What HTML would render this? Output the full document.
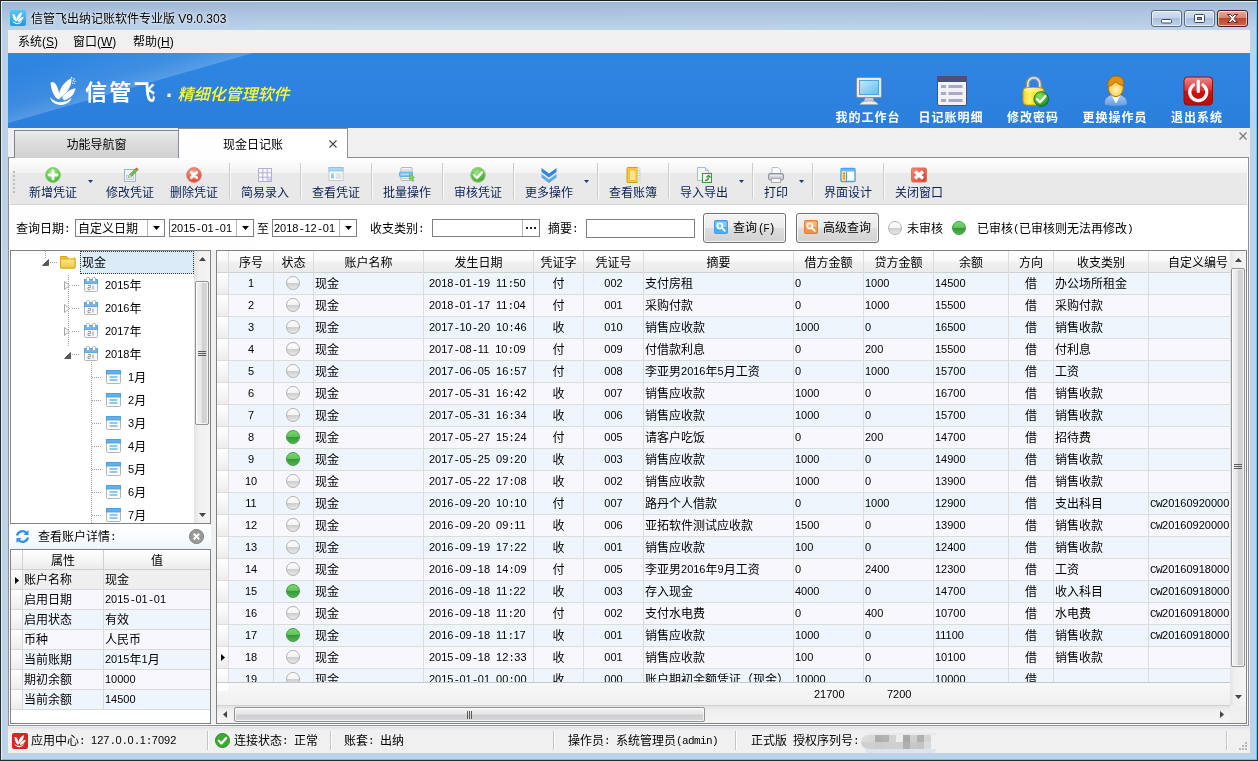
<!DOCTYPE html>
<html lang="zh-CN"><head><meta charset="utf-8"><title>信管飞出纳记账软件专业版 V9.0.303</title>
<style>
html,body{margin:0;padding:0}
body{width:1258px;height:761px;position:relative;overflow:hidden;background:#b9d1ea;
 font-family:"Liberation Sans","Noto Sans CJK SC",sans-serif;font-size:12px;line-height:14px;color:#000}
div,span,svg,i,b{position:absolute;box-sizing:border-box;display:block;font-style:normal;font-weight:normal}
#root{left:0;top:0;width:1258px;height:761px;will-change:transform;opacity:.999}
.t{white-space:nowrap;line-height:14px;height:14px}
.n,.p{position:relative;display:inline;top:-1.5px;font-size:11px}
.n{font-family:"Liberation Sans",sans-serif;letter-spacing:0}
.p{font-family:"Liberation Mono",monospace;letter-spacing:-0.6px}

#frame{left:0;top:0;width:1258px;height:761px;background:linear-gradient(180deg,#9db5d3 0px,#a9c1de 12px,#bdd3ea 30px,#bdd3ea 100%);}
#frame .edge{left:0;top:0;width:1258px;height:761px;border:1px solid #2b2b2b;border-top-color:#1c1c1c}
#frame .edge2{left:1px;top:1px;width:1256px;height:759px;border:1px solid #d9f3fb;border-right-color:#4fd2f0;border-bottom-color:#4fd2f0}
#tshine{left:2px;top:2px;width:1254px;height:28px;background:linear-gradient(90deg,rgba(255,255,255,0) 0%,rgba(255,255,255,.02) 40%,rgba(255,255,255,.05) 100%)}
#client{left:8px;top:30px;width:1242px;height:723px;background:#f0f0f0}
#ticon{left:10px;top:10px;width:16px;height:16px}
#title{left:31px;top:11px;font-size:12px;line-height:16px;height:16px;white-space:nowrap;color:#000;text-shadow:0 0 6px #fff,0 0 3px rgba(255,255,255,.8)}
.wb{top:10px;height:17px;width:31px;border:1px solid #5a6a80;border-radius:3px;background:linear-gradient(180deg,#d5e2f2 0%,#c3d5ea 45%,#a9c1de 50%,#bdd2e8 100%);box-shadow:inset 0 0 0 1px rgba(255,255,255,.6)}
#wclose{background:linear-gradient(180deg,#e9a99b 0%,#d98673 45%,#c2442b 50%,#d0664c 100%);border-color:#4b1d1d}

#menubar{left:8px;top:30px;width:1242px;height:23px;background:#f1f1f1}
#menubar .t{top:4px;font-size:12px;line-height:16px;height:16px}
#menubar u{text-decoration:underline}

#banner{left:8px;top:53px;width:1242px;height:75px;background:#2d84df;overflow:hidden}
#banner svg.bg{left:0;top:0}
#logo{left:41.800px;top:24.300px;width:26px;height:29px}
#brand{left:77px;top:26px;font-size:22px;line-height:28px;height:28px;color:#fff;font-weight:700;white-space:nowrap;letter-spacing:2.2px}
#bdot{left:158px;top:33px;font-size:22px;line-height:20px;color:#fff;font-weight:900}
#slogan{left:168px;top:31px;font-size:16px;line-height:22px;height:22px;color:#ffff30;font-weight:500;font-style:normal;white-space:nowrap;transform:skewX(-14deg);transform-origin:0 100%;}
.bi{top:22px;width:90px;height:53px}
.bi svg{top:0;left:30px;width:32px;height:32px}
.bi .l{left:0;width:90px;top:35px;text-align:center;color:#fff;font-family:"Liberation Sans","Noto Sans CJK SC",sans-serif;font-weight:700;font-size:12px;line-height:16px;height:16px;letter-spacing:1px;white-space:nowrap}

#tabstrip{left:8px;top:128px;width:1242px;height:30px;background:#f0f0f0}
#tab1{left:14px;top:130px;width:165px;height:28px;border:1px solid #7d8494;border-bottom:none;background:linear-gradient(180deg,#ececec 0%,#dedede 40%,#d2d2d2 100%)}
#tab2{left:178px;top:128px;width:170px;height:30px;border:1px solid #8a8f9c;border-bottom:none;background:#fff}
#tab1 .t,#tab2 .t{top:6px;line-height:16px;height:16px}
#page{left:8px;top:157px;width:1241px;height:569px;border:1px solid #8a8f9c;background:#fff}
#pagecover{left:179px;top:157px;width:168px;height:1px;background:#fff}
#tabx{left:1238px;top:131px;width:10px;height:10px}

#toolbar{left:10px;top:158px;width:1237px;height:47px;background:linear-gradient(180deg,#ffffff 0px,#f3f3f3 15px,#e9e9e9 15px,#e8e8e8 46px);border-bottom:1px solid #d6d6d6}
#tgrip{left:13px;top:171px;width:2px;height:23px;background:repeating-linear-gradient(180deg,#b9bcc4 0,#b9bcc4 2px,transparent 2px,transparent 4px)}
.tb{top:158px;height:46px}
.tb svg{top:9px;width:16px;height:16px}
.tb .t{top:28px;color:#0a2152;line-height:14px;height:14px}
.tsep{top:163px;width:1px;height:36px;background:#c9cbd1;box-shadow:1px 0 0 #fbfbfb}
.tarr{top:180px;width:5px;height:3px}

.fl{top:222px;line-height:14px;height:14px;white-space:nowrap}
.inp{top:219px;height:18px;border:1px solid #7f7f7f;background:#fff}
.inp .t{top:2px;left:2px}
.inp .dd{top:0;right:0;width:17px;height:16px;border-left:1px solid #b5b5b5;background:#fff}
.inp .dd svg{left:5px;top:6px;width:7px;height:4px}
.btn{top:213px;height:30px;border:1px solid #707070;border-radius:3px;background:linear-gradient(180deg,#f4f4f4 0%,#ebebeb 48%,#dddddd 52%,#d2d2d2 100%);box-shadow:inset 0 0 0 1px rgba(255,255,255,.8)}
.btn .t{top:7px}
.btn svg{top:6px;width:14px;height:14px}
.ball{width:14px;height:14px;border-radius:50%}
.ball.g{background:linear-gradient(180deg,#ffffff 0%,#f4f4f4 46%,#cfcfcf 54%,#e9e9e9 100%);border:1px solid #b2b2b2}
.ball.v{background:linear-gradient(180deg,#7bd676 0%,#5ec459 46%,#37983a 54%,#4db54c 100%);border:1px solid #3f9e40}

#tree{left:10px;top:250px;width:201px;height:274px;border:1px solid #828282;background:#fff;overflow:hidden}
#tree .t{line-height:14px;height:14px}
#tsel{left:69px;top:0;width:114px;height:23px;background:#dcebf8;border:1px dotted #333}
.vsb{background:linear-gradient(90deg,#e3e3e3 0%,#f0f0f0 30%,#f4f4f4 100%)}
.thumbv{border:1px solid #8f9297;border-radius:2px;background:linear-gradient(90deg,#f3f3f3 0%,#e6e6e6 45%,#cfcfd1 55%,#d9d9db 100%);box-shadow:inset 0 0 0 1px rgba(255,255,255,.7)}
.thumbh{border:1px solid #8f9297;border-radius:2px;background:linear-gradient(180deg,#f3f3f3 0%,#e6e6e6 45%,#cfcfd1 55%,#d9d9db 100%);box-shadow:inset 0 0 0 1px rgba(255,255,255,.7)}
.dot-h{height:1px;background:repeating-linear-gradient(90deg,#a0a0a0 0,#a0a0a0 1px,transparent 1px,transparent 2px)}
.dot-v{width:1px;background:repeating-linear-gradient(180deg,#a0a0a0 0,#a0a0a0 1px,transparent 1px,transparent 2px)}
#acct{left:10px;top:524px;width:201px;height:25px;background:linear-gradient(180deg,#ffffff 0%,#f8fbfe 60%,#edf4fb 100%)}
#prop{left:10px;top:549px;width:201px;height:175px;border:1px solid #828282;background:#fff;overflow:hidden}
#prop .hd{top:0;height:20px;background:linear-gradient(180deg,#ffffff 0%,#f6f6f6 50%,#ebebeb 100%);border-bottom:1px solid #d0d0d0;border-right:1px solid #d0d0d0}
#prop .c{height:20px;border-bottom:1px solid #d9d9dc;border-right:1px solid #d9d9dc}
#prop .t{top:3px}
#prop .hd .t{top:4px}

#grid{left:216px;top:250px;width:1031px;height:474px;border:1px solid #828282;background:#fff;overflow:hidden}
#gbody{left:0;top:0;width:1013px;height:431px;overflow:hidden}
#ghead{left:0;top:0;width:1013px;height:22px;background:linear-gradient(180deg,#ffffff 0%,#fafafa 45%,#f0f0f0 55%,#ebebeb 100%);border-bottom:1px solid #d0d0d0}
#ghead .t{top:5px;text-align:center}
.gr{left:0;width:1013px;height:22px;border-bottom:1px solid #dcdcdc}
.gr .t{top:4px}
.gr .ball{top:3px;left:69px}
.gr.a{background:#eef5fd}
.gr.b{background:#f7f7fd}
.gr .ind{left:0;top:0;width:11px;height:21px;background:linear-gradient(180deg,#ffffff 0%,#f7f7f7 50%,#ececec 100%)}
.vl{top:0;width:1px;height:432px;background:#dcdcdc}
.c{text-align:center}
#gfoot{left:0;top:431px;width:1013px;height:24px;background:linear-gradient(180deg,#f8f8f8,#f0f0f0);border-top:1px solid #c8c8c8;border-bottom:1px solid #d0d0d0}
#gfoot .t{top:5px}
#hsb{left:0;top:455px;width:1013px;height:17px;background:linear-gradient(180deg,#e3e3e3 0%,#f0f0f0 30%,#f4f4f4 100%)}
#vsb2{left:1013px;top:0;width:16px;height:455px}
#corner{left:1013px;top:455px;width:16px;height:17px;background:#f0f0f0}

#status{left:8px;top:727px;width:1242px;height:26px;background:linear-gradient(180deg,#dcdcdc 0px,#ececec 2px,#f0f0f0 5px,#f0f0f0 100%)}
#status .t{top:7px}
#status .sp{top:4px;width:1px;height:19px;background:#c4c4c4;box-shadow:1px 0 0 #fff}
#mosaic{left:861px;top:732px;width:78px;height:21px;overflow:hidden;filter:blur(.4px)}
</style></head><body>
<div id="root">
<div id="frame"><div id="tshine"></div><div class="edge"></div><div class="edge2"></div></div>
<div id="client"></div>
<svg id="ticon" viewBox="0 0 16 16"><defs><linearGradient id="tig" x1="0" y1="0" x2="0" y2="1"><stop offset="0" stop-color="#55c8f4"/><stop offset="1" stop-color="#1b9ce2"/></linearGradient></defs><rect x="0" y="0" width="16" height="16" rx="2" fill="url(#tig)"/><g fill="#fff" transform="translate(2.200 1.600) scale(.45)"><path d="M0.500 6C1.800 4.800 3.400 4.800 4.600 5.800 7.200 8.500 9.200 14 9.900 21.600L8.300 22.300C5 21 1.300 14.500 0.500 6Z"/><path d="M8.900 21.800C8 15 11.500 6.500 21.200 0.900 22.300 6 19.500 13 12.600 19.300Z"/><path d="M12.200 20.800C15 16 19.500 12.500 25.400 11.300 25 16 21.500 21 14.500 23.300 13.500 22.800 12.600 21.800 12.200 20.800Z"/><path d="M0 20C2 23 5.500 24.800 9.800 25.200 14.500 25.500 18.500 24 21.300 21.100 20.800 25 16.500 27.800 11 27.900 5.500 28 1 25 0 20Z"/></g></svg>
<div id="title">信管飞出纳记账软件专业版 V9.0.303</div>
<div class="wb" style="left:1151px"><svg width="29" height="15" style="left:0;top:0" viewBox="0 0 29 15"><rect x="9.500" y="8.500" width="10" height="3.500" rx="1" fill="#fff" stroke="#3d4b5f"/></svg></div>
<div class="wb" style="left:1184px"><svg width="29" height="15" style="left:0;top:0" viewBox="0 0 29 15"><rect x="9.500" y="3.500" width="10" height="8" rx="1" fill="#fff" stroke="#3d4b5f"/><rect x="12.500" y="6.500" width="4" height="2" fill="#8ea2bd" stroke="#3d4b5f"/></svg></div>
<div class="wb" id="wclose" style="left:1217px;width:31px"><svg width="29" height="15" style="left:0;top:0" viewBox="0 0 29 15"><path d="M9.500 3.500h3l2 2 2-2h3l-3.500 4 3.500 4h-3l-2-2-2 2h-3l3.500-4z" fill="#fff" stroke="#55282a" stroke-width="1" stroke-linejoin="round"/></svg></div>
<div id="menubar"><span class="t" style="left:10px">系统(<u>S</u>)</span><span class="t" style="left:65px">窗口(<u>W</u>)</span><span class="t" style="left:125px">帮助(<u>H</u>)</span></div>
<div id="banner"><svg class="bg" width="1242" height="75" viewBox="0 0 1242 75"><defs>
<linearGradient id="bg0" x1="0" y1="0" x2="0" y2="1"><stop offset="0" stop-color="#2f86e1"/><stop offset="1" stop-color="#2a7fdc"/></linearGradient>
<linearGradient id="bg1" gradientUnits="userSpaceOnUse" x1="40" y1="-20" x2="70" y2="85"><stop offset="0.250" stop-color="#fff" stop-opacity="0"/><stop offset="0.550" stop-color="#fff" stop-opacity="0.080"/><stop offset="0.780" stop-color="#fff" stop-opacity="0.270"/><stop offset="0.800" stop-color="#fff" stop-opacity="0"/></linearGradient>
</defs><rect width="1242" height="75" fill="url(#bg0)"/>
<polygon points="0,0 245,0 0,70" fill="url(#bg1)"/></svg><svg id="logo" viewBox="0 0 26 29"><g fill="#fff"><path d="M0.500 6C1.800 4.800 3.400 4.800 4.600 5.800 7.200 8.500 9.200 14 9.900 21.600L8.300 22.300C5 21 1.300 14.500 0.500 6Z"/><path d="M8.900 21.800C8 15 11.500 6.500 21.200 0.900 22.300 6 19.500 13 12.600 19.300Z"/><path d="M12.200 20.800C15 16 19.500 12.500 25.400 11.300 25 16 21.500 21 14.500 23.300 13.500 22.800 12.600 21.800 12.200 20.800Z"/><path d="M0 20C2 23 5.500 24.800 9.800 25.200 14.500 25.500 18.500 24 21.300 21.100 20.800 25 16.500 27.800 11 27.900 5.500 28 1 25 0 20Z"/><rect x="21" y="0" width="1.300" height="1.300"/><rect x="23.400" y="1.300" width="1.300" height="1.300"/><rect x="22.600" y="3.200" width="1.200" height="1.200"/><rect x="24.500" y="3.800" width="1.100" height="1.100"/><rect x="22" y="5.600" width="1.100" height="1.100"/><rect x="23.800" y="6" width="1" height="1"/></g></svg><div id="brand">信管飞</div><div id="bdot">·</div><div id="slogan">精细化管理软件</div><div class="bi" style="left:815px"><svg viewBox="0 0 32 32"><defs><linearGradient id="mo1" x1="0" y1="0" x2="1" y2="1"><stop offset="0" stop-color="#bfeaff"/><stop offset="1" stop-color="#5fbdf5"/></linearGradient></defs><rect x="3.500" y="2.500" width="25" height="20" rx="1.500" fill="#e8eaee" stroke="#8d939c"/><rect x="6.500" y="5.500" width="19" height="14" fill="url(#mo1)" stroke="#4aa6e6"/><path d="M12 23h8l1 3.500h-10z" fill="#c9ccd2"/><path d="M7 29.500c1-3 5-3.500 9-3.500s8 .5 9 3.500z" fill="#eceef1" stroke="#a3a8b0" stroke-width=".8"/></svg><span class="l">我的工作台</span></div><div class="bi" style="left:898px"><svg viewBox="0 0 32 32"><rect x="1.500" y="1.500" width="29" height="29" rx="1.500" fill="#f1f1f6" stroke="#4a4f73"/><rect x="1.500" y="1.500" width="29" height="5" fill="#4a5078" stroke="#4a4f73"/><g fill="#a9a9c6"><rect x="5" y="10" width="5" height="3"/><rect x="12.500" y="10" width="14" height="3"/><rect x="5" y="17" width="5" height="3"/><rect x="12.500" y="17" width="14" height="3"/><rect x="5" y="24" width="5" height="3"/><rect x="12.500" y="24" width="14" height="3"/></g></svg><span class="l">日记账明细</span></div><div class="bi" style="left:980px"><svg viewBox="0 0 32 32"><defs><linearGradient id="lk1" x1="0" y1="0" x2="1" y2="0"><stop offset="0" stop-color="#f2cf1a"/><stop offset=".3" stop-color="#fff36a"/><stop offset=".6" stop-color="#ffe21a"/><stop offset="1" stop-color="#d9a400"/></linearGradient><radialGradient id="lk2" cx=".4" cy=".3" r=".75"><stop offset="0" stop-color="#8be45f"/><stop offset="1" stop-color="#168a16"/></radialGradient></defs><path d="M9.800 15v-6.200a6 6 0 0 1 12 0v6.200" fill="none" stroke="#8a9098" stroke-width="4.200"/><path d="M9.800 15v-6.200a6 6 0 0 1 12 0v6.200" fill="none" stroke="#dfe3e8" stroke-width="1.600"/><rect x="5" y="12.500" width="21" height="17.500" rx="4" fill="url(#lk1)" stroke="#c99a08" stroke-width=".9"/><ellipse cx="15.500" cy="15" rx="9.500" ry="2.200" fill="#fff7a0" opacity=".7"/><circle cx="23.200" cy="24" r="7.300" fill="url(#lk2)" stroke="#0f6a12" stroke-width=".8"/><path d="M19 24.200l3 3 5.200-6" fill="none" stroke="#fff" stroke-width="2.500" stroke-linecap="round" stroke-linejoin="round"/></svg><span class="l">修改密码</span></div><div class="bi" style="left:1062px"><svg viewBox="0 0 32 32"><defs><radialGradient id="us1" cx=".5" cy=".6" r=".6"><stop offset="0" stop-color="#fff6c8"/><stop offset=".6" stop-color="#ffd45a"/><stop offset="1" stop-color="#f7a61a"/></radialGradient><linearGradient id="us2" x1="0" y1="0" x2="0" y2="1"><stop offset="0" stop-color="#a9cdf5"/><stop offset="1" stop-color="#5f9ae2"/></linearGradient></defs><path d="M4.500 30c-1.200-5.500 2.500-9 7-10.300h8.500c4.500 1.300 8.200 4.800 7 10.300-5.500 1.800-17 1.800-22.500 0z" fill="url(#us2)" stroke="#3f78c8" stroke-width=".9"/><path d="M11.500 20l4.500 8.500 4.500-8.500z" fill="#fff"/><ellipse cx="15.800" cy="12.800" rx="7.600" ry="8.800" fill="url(#us1)" stroke="#b86a00" stroke-width="1"/><path d="M7.800 11.500c-.8-6.500 3.500-10.800 8.800-10.500 4.800.2 8 3.500 7.300 9.500-3.200-.2-6.500-1.500-8.500-3.800-1.500 2.500-4.300 4.200-7.600 4.800z" fill="#e0900e" stroke="#a85e00" stroke-width=".8"/></svg><span class="l">更换操作员</span></div><div class="bi" style="left:1144px"><svg viewBox="0 0 32 32"><defs><linearGradient id="pw1" x1="0" y1="0" x2="0" y2="1"><stop offset="0" stop-color="#ee8a8a"/><stop offset=".48" stop-color="#d93030"/><stop offset=".5" stop-color="#c81414"/><stop offset="1" stop-color="#b80c0c"/></linearGradient></defs><rect x="2" y="2" width="28.500" height="28" rx="3.500" fill="url(#pw1)" stroke="#8e1010"/><path d="M11.500 10a8.500 8.500 0 1 0 9.500 0" fill="none" stroke="#fff" stroke-width="3.200" stroke-linecap="round"/><path d="M16.250 6v10.500" stroke="#fff" stroke-width="3.200" stroke-linecap="round"/></svg><span class="l">退出系统</span></div></div>
<div id="tabstrip"></div><div id="page"></div><div id="tab1"><span class="t" style="left:0;width:163px;text-align:center">功能导航窗</span></div><div id="tab2"><span class="t" style="left:44px;top:8px">现金日记账</span><svg style="left:150px;top:11px" width="8" height="8" viewBox="0 0 8 8"><path d="M0.500 0.500l7 7M7.500 0.500l-7 7" stroke="#444" stroke-width="1.100" fill="none"/></svg></div><div id="pagecover"></div><svg id="tabx" viewBox="0 0 10 10"><path d="M1.500 1.500l7 7M8.500 1.500l-7 7" stroke="#7a7a7a" stroke-width="1.300" fill="none"/></svg>
<div id="toolbar"></div><div id="tgrip"></div><div class="tb" style="left:29px;width:48px"><svg style="left:16px" viewBox="0 0 16 16"><defs><radialGradient id="ia1" cx=".45" cy=".3" r=".8"><stop offset="0" stop-color="#a9ec8c"/><stop offset=".6" stop-color="#62c94c"/><stop offset="1" stop-color="#3aa82e"/></radialGradient></defs><circle cx="8" cy="8" r="7.400" fill="url(#ia1)" stroke="#7fd46a" stroke-width="1"/><path d="M8 4v8M4 8h8" stroke="#fff" stroke-width="2.800" stroke-linecap="round"/></svg><span class="t" style="left:0">新增凭证</span></div><div class="tb" style="left:106px;width:48px"><svg style="left:17px" viewBox="0 0 16 16"><rect x="1.500" y="2.500" width="11" height="12" fill="#f4f7fc" stroke="#9fb3d6"/><rect x="3.500" y="8.500" width="7" height="4" fill="#dfe8f6" stroke="#b7c7e4" stroke-width=".8"/><path d="M5.500 10.500l1-3 6-6 2 2-6 6z" fill="#6cc04a" stroke="#4f9a35" stroke-width=".6"/><path d="M12.500 1.500l1.200-1 2 2-1.200 1z" fill="#e05050"/><path d="M5.500 10.500l1-3 2 2z" fill="#f3d9a8"/></svg><span class="t" style="left:0">修改凭证</span></div><div class="tb" style="left:170px;width:48px"><svg style="left:16px" viewBox="0 0 16 16"><defs><radialGradient id="id1" cx=".45" cy=".3" r=".8"><stop offset="0" stop-color="#f7a896"/><stop offset=".6" stop-color="#e8604c"/><stop offset="1" stop-color="#cf3d2a"/></radialGradient></defs><circle cx="8" cy="8" r="7.400" fill="url(#id1)" stroke="#ee8270" stroke-width="1"/><path d="M5.200 5.200l5.600 5.600M10.800 5.200l-5.600 5.600" stroke="#fff" stroke-width="2.800" stroke-linecap="round"/></svg><span class="t" style="left:0">删除凭证</span></div><div class="tb" style="left:241px;width:48px"><svg style="left:16px" viewBox="0 0 16 16"><rect x="1.500" y="1.500" width="13" height="13" fill="#f7f6fc" stroke="#b4b0d2"/><path d="M1.500 5.800h13M1.500 10.200h13M5.800 1.500v13M10.200 1.500v13" stroke="#b4b0d2" stroke-width="1"/><rect x="10.700" y="10.700" width="3.300" height="3.300" fill="#d6d2ee"/></svg><span class="t" style="left:0">简易录入</span></div><div class="tb" style="left:312px;width:48px"><svg style="left:16px" viewBox="0 0 16 16"><rect x="1" y="0.500" width="14" height="13" fill="#fff" stroke="#c4c8d0"/><rect x="1" y="0.500" width="14" height="3.500" fill="#a5d8fa" stroke="#7cc0f0" stroke-width=".8"/><rect x="3" y="6.500" width="3" height="5" fill="#8fc8f2"/><path d="M7.500 7h6M7.500 9h6M7.500 11h6" stroke="#c2c6d0" stroke-width="1"/></svg><span class="t" style="left:0">查看凭证</span></div><div class="tb" style="left:383px;width:48px"><svg style="left:16px" viewBox="0 0 16 16"><rect x="2" y="0.500" width="11" height="13" rx="1" fill="#f6f6f7" stroke="#b4b6bc"/><path d="M3 3h9M3 11.500h9" stroke="#c9cbd0"/><rect x="0.500" y="5" width="13" height="4.500" rx="1" fill="#7cc4f4" stroke="#4fa6e6" stroke-width=".8"/><path d="M2 7.200h10" stroke="#d8efff" stroke-width=".8"/><path d="M10.500 6.500l5 4-2 .4 1.400 2.700-1.400.7-1.400-2.700-1.600 1.400z" fill="#7ddc5a" stroke="#4fb432" stroke-width=".6"/></svg><span class="t" style="left:0">批量操作</span></div><div class="tb" style="left:454px;width:48px"><svg style="left:16px" viewBox="0 0 16 16"><defs><radialGradient id="iu1" cx=".4" cy=".3" r=".8"><stop offset="0" stop-color="#a6e38a"/><stop offset=".6" stop-color="#5ab944"/><stop offset="1" stop-color="#3b9a2a"/></radialGradient></defs><circle cx="8" cy="8" r="7.300" fill="url(#iu1)" stroke="#8fcf7c" stroke-width="1.200"/><path d="M4.200 8.200l2.800 2.800 5-5.800" fill="none" stroke="#fff" stroke-width="2.400" stroke-linecap="round" stroke-linejoin="round"/></svg><span class="t" style="left:0">审核凭证</span></div><div class="tb" style="left:525px;width:48px"><svg style="left:16px" viewBox="0 0 16 16"><path d="M0.500 1L8 6.500 15.500 1v4L8 10.500 0.500 5z" fill="#2f86e8"/><path d="M0.500 7L8 12.500 15.500 7v3.500L8 16 0.500 10.500z" fill="#5aa8f2"/></svg><span class="t" style="left:0">更多操作</span></div><div class="tb" style="left:609px;width:48px"><svg style="left:16px" viewBox="0 0 16 16"><rect x="2" y="0.500" width="11" height="15" rx="1" fill="#f6c93a" stroke="#cf9d16"/><rect x="4.500" y="3" width="6.500" height="10.500" rx="1" fill="#fbe489" stroke="#e8b62a" stroke-width=".8"/><rect x="12.500" y="1" width="2.500" height="14" fill="#f4f4f4" stroke="#c8c8c8" stroke-width=".6"/><path d="M12.500 3.500h2.500M12.500 6h2.500M12.500 8.500h2.500M12.500 11h2.500M12.500 13h2.500" stroke="#b9b9b9" stroke-width=".6"/></svg><span class="t" style="left:0">查看账簿</span></div><div class="tb" style="left:680px;width:48px"><svg style="left:16px" viewBox="0 0 16 16"><path d="M1.500 0.500h8l3 3v10h-11z" fill="#f5f8fd" stroke="#a8b8d8"/><path d="M9.500 0.500v3h3" fill="#dfe7f5" stroke="#a8b8d8"/><rect x="6.500" y="6.500" width="9" height="9" fill="#fff" stroke="#3f9a3a" stroke-width="1.200"/><path d="M9 13.500c2.500 0 3.500-1.500 3.500-3M10.500 10.500l2-2 2 2" fill="none" stroke="#2f9a2f" stroke-width="1.500"/></svg><span class="t" style="left:0">导入导出</span></div><div class="tb" style="left:764px;width:24px"><svg style="left:4px" viewBox="0 0 16 16"><path d="M4 0.500h6l2.500 2.500v5h-8.500z" fill="#fafbfd" stroke="#b6bcc8"/><rect x="0.500" y="6.500" width="15" height="6.500" rx="1.500" fill="#c7cad1" stroke="#8d929c"/><rect x="2" y="8" width="12" height="1.500" fill="#e6e8ec"/><rect x="3.500" y="11.500" width="9" height="4" fill="#f6f7f9" stroke="#a5aab4"/></svg><span class="t" style="left:0">打印</span></div><div class="tb" style="left:824px;width:48px"><svg style="left:16px" viewBox="0 0 16 16"><rect x="1" y="1.500" width="14" height="13" rx="1" fill="#fff" stroke="#4c9ff0" stroke-width="1.400"/><rect x="1.500" y="2" width="13" height="2.500" fill="#6db4f5"/><rect x="2" y="4.500" width="4" height="9.500" fill="#fbe68a"/><path d="M3 6.500h2M3 9h2M3 11.500h2" stroke="#e07a1e" stroke-width="1.300"/><path d="M6.500 4.500v9.500" stroke="#4c9ff0"/></svg><span class="t" style="left:0">界面设计</span></div><div class="tb" style="left:895px;width:48px"><svg style="left:16px" viewBox="0 0 16 16"><defs><linearGradient id="ic1" x1="0" y1="0" x2="1" y2="1"><stop offset="0" stop-color="#f68a76"/><stop offset="1" stop-color="#dc3c26"/></linearGradient></defs><rect x="0.500" y="1" width="15" height="14" rx="1.500" fill="url(#ic1)" stroke="#e0705e"/><path d="M4 4.500l8 7M12 4.500l-8 7" stroke="#fff" stroke-width="3.400" stroke-linecap="butt"/></svg><span class="t" style="left:0">关闭窗口</span></div><div class="tsep" style="left:229px"></div><div class="tsep" style="left:300px"></div><div class="tsep" style="left:371px"></div><div class="tsep" style="left:442px"></div><div class="tsep" style="left:513px"></div><div class="tsep" style="left:597px"></div><div class="tsep" style="left:668px"></div><div class="tsep" style="left:752px"></div><div class="tsep" style="left:812px"></div><div class="tsep" style="left:883px"></div><svg class="tarr" style="left:88px" viewBox="0 0 5 3"><path d="M0 0h5l-2.500 3z" fill="#1e3a6b"/></svg><svg class="tarr" style="left:584px" viewBox="0 0 5 3"><path d="M0 0h5l-2.500 3z" fill="#1e3a6b"/></svg><svg class="tarr" style="left:739px" viewBox="0 0 5 3"><path d="M0 0h5l-2.500 3z" fill="#1e3a6b"/></svg><svg class="tarr" style="left:799px" viewBox="0 0 5 3"><path d="M0 0h5l-2.500 3z" fill="#1e3a6b"/></svg>
<span class="fl" style="left:16px">查询日期<span class="p">:</span></span><div class="inp" style="left:75px;width:90px"><span class="t">自定义日期</span><i class="dd"><svg viewBox="0 0 7 4"><path d="M0 0h7l-3.500 4z" fill="#000"/></svg></i></div><div class="inp" style="left:169px;width:85px"><span class="t" style="left:1px"><span class="n">2015</span><span class="p">-</span><span class="n">01</span><span class="p">-</span><span class="n">01</span></span><i class="dd"><svg viewBox="0 0 7 4"><path d="M0 0h7l-3.500 4z" fill="#000"/></svg></i></div><span class="fl" style="left:257px">至</span><div class="inp" style="left:272px;width:85px"><span class="t" style="left:1px"><span class="n">2018</span><span class="p">-</span><span class="n">12</span><span class="p">-</span><span class="n">01</span></span><i class="dd"><svg viewBox="0 0 7 4"><path d="M0 0h7l-3.500 4z" fill="#000"/></svg></i></div><span class="fl" style="left:370px">收支类别<span class="p">:</span></span><div class="inp" style="left:432px;width:108px"><i class="dd" style="width:17px"><svg style="left:3px;top:7px;width:10px;height:2px" viewBox="0 0 10 2"><path d="M0 0h2v2h-2zM4 0h2v2h-2zM8 0h2v2h-2z" fill="#222"/></svg></i></div><span class="fl" style="left:548px">摘要<span class="p">:</span></span><div class="inp" style="left:586px;width:109px;height:19px"></div><div class="btn" style="left:703px;width:83px"><svg style="left:10px" viewBox="0 0 15 15"><rect x="0.500" y="0.500" width="14" height="14" rx="1.500" fill="#4aaef0" stroke="#3d9be6"/><rect x="1.500" y="1.500" width="12" height="6" rx="1" fill="#a8defc" opacity=".6"/><circle cx="6.300" cy="6.300" r="2.800" fill="none" stroke="#fff" stroke-width="1.700"/><path d="M8.600 8.600l3 3" stroke="#fff" stroke-width="2" stroke-linecap="round"/></svg><span class="t" style="left:29px">查询<span style="position:static;display:inline;margin-left:2px;letter-spacing:.5px">(<span style="position:static;display:inline;font-size:10px">F</span>)</span></span></div><div class="btn" style="left:796px;width:83px"><svg style="left:7px" viewBox="0 0 15 15"><rect x="0.500" y="0.500" width="14" height="14" rx="1.500" fill="#f0924a" stroke="#e07a34"/><rect x="1.500" y="1.500" width="12" height="6" rx="1" fill="#ffd0a4" opacity=".6"/><circle cx="6.300" cy="6.300" r="2.800" fill="none" stroke="#fff" stroke-width="1.700"/><path d="M8.600 8.600l3 3" stroke="#fff" stroke-width="2" stroke-linecap="round"/></svg><span class="t" style="left:26px">高级查询</span></div><div class="ball g" style="left:888px;top:221px"></div><span class="fl" style="left:907px">未审核</span><div class="ball v" style="left:952px;top:221px"></div><span class="fl" style="left:977px">已审核<span class="p">(</span>已审核则无法再修改<span class="p">)</span></span>
<div style="left:211px;top:250px;width:5px;height:474px;background:#f0f0f0"></div><div id="tree"><div id="tsel"></div><svg style="left:31px;top:8px" width="7" height="7" viewBox="0 0 7 7"><path d="M6.500 0.500v6h-6z" fill="#595959" stroke="#262626" stroke-width=".6"/></svg><div class="dot-h" style="left:39px;top:11px;width:7px"></div><div class="dot-v" style="left:34px;top:0;width:1px;height:8px"></div><svg style="left:49px;top:4px" width="16" height="14" viewBox="0 0 16 14"><defs><linearGradient id="fo1" x1="0" y1="0" x2="0" y2="1"><stop offset="0" stop-color="#fde88a"/><stop offset="1" stop-color="#f3c838"/></linearGradient></defs><path d="M0.500 1.500h6l1 1.500h7.500v10h-14.500z" fill="#f0c233" stroke="#d3a21c"/><rect x="0.500" y="4" width="14.500" height="9" rx=".5" fill="url(#fo1)" stroke="#d9a920"/><rect x="8.500" y="1.500" width="5" height="2" fill="#fff6c8"/></svg><span class="t" style="left:71px;top:5px">现金</span><div class="dot-v" style="left:57px;top:24px;height:72px"></div><svg style="left:53px;top:30px" width="7" height="9" viewBox="0 0 7 9"><path d="M0.500 0.500l5 4-5 4z" fill="#fff" stroke="#a6a6a6" stroke-width="1"/></svg><div class="dot-h" style="left:61px;top:34px;width:8px"></div><svg style="left:73px;top:26px" width="14" height="15" viewBox="0 0 14 15"><rect x="0.500" y="2.500" width="13" height="12" rx="1" fill="#f7f7f7" stroke="#b4b4b4"/><rect x="0.500" y="2.500" width="13" height="4" fill="#6db8f2" stroke="#4c9fe2" stroke-width=".8"/><rect x="2.500" y="0.500" width="3" height="4" rx="1" fill="#fff" stroke="#9a9a9a" stroke-width=".8"/><rect x="8.500" y="0.500" width="3" height="4" rx="1" fill="#fff" stroke="#9a9a9a" stroke-width=".8"/><path d="M4 8.500h2.500v2h-2.500v2h2.500M9 8.500v4" fill="none" stroke="#9a9a9a" stroke-width="1"/></svg><span class="t" style="left:94px;top:28px"><span class="n">2015</span>年</span><svg style="left:53px;top:53px" width="7" height="9" viewBox="0 0 7 9"><path d="M0.500 0.500l5 4-5 4z" fill="#fff" stroke="#a6a6a6" stroke-width="1"/></svg><div class="dot-h" style="left:61px;top:57px;width:8px"></div><svg style="left:73px;top:49px" width="14" height="15" viewBox="0 0 14 15"><rect x="0.500" y="2.500" width="13" height="12" rx="1" fill="#f7f7f7" stroke="#b4b4b4"/><rect x="0.500" y="2.500" width="13" height="4" fill="#6db8f2" stroke="#4c9fe2" stroke-width=".8"/><rect x="2.500" y="0.500" width="3" height="4" rx="1" fill="#fff" stroke="#9a9a9a" stroke-width=".8"/><rect x="8.500" y="0.500" width="3" height="4" rx="1" fill="#fff" stroke="#9a9a9a" stroke-width=".8"/><path d="M4 8.500h2.500v2h-2.500v2h2.500M9 8.500v4" fill="none" stroke="#9a9a9a" stroke-width="1"/></svg><span class="t" style="left:94px;top:51px"><span class="n">2016</span>年</span><svg style="left:53px;top:76px" width="7" height="9" viewBox="0 0 7 9"><path d="M0.500 0.500l5 4-5 4z" fill="#fff" stroke="#a6a6a6" stroke-width="1"/></svg><div class="dot-h" style="left:61px;top:80px;width:8px"></div><svg style="left:73px;top:72px" width="14" height="15" viewBox="0 0 14 15"><rect x="0.500" y="2.500" width="13" height="12" rx="1" fill="#f7f7f7" stroke="#b4b4b4"/><rect x="0.500" y="2.500" width="13" height="4" fill="#6db8f2" stroke="#4c9fe2" stroke-width=".8"/><rect x="2.500" y="0.500" width="3" height="4" rx="1" fill="#fff" stroke="#9a9a9a" stroke-width=".8"/><rect x="8.500" y="0.500" width="3" height="4" rx="1" fill="#fff" stroke="#9a9a9a" stroke-width=".8"/><path d="M4 8.500h2.500v2h-2.500v2h2.500M9 8.500v4" fill="none" stroke="#9a9a9a" stroke-width="1"/></svg><span class="t" style="left:94px;top:74px"><span class="n">2017</span>年</span><svg style="left:53px;top:101px" width="7" height="7" viewBox="0 0 7 7"><path d="M6.500 0.500v6h-6z" fill="#595959" stroke="#262626" stroke-width=".6"/></svg><div class="dot-h" style="left:61px;top:103px;width:8px"></div><svg style="left:73px;top:95px" width="14" height="15" viewBox="0 0 14 15"><rect x="0.500" y="2.500" width="13" height="12" rx="1" fill="#f7f7f7" stroke="#b4b4b4"/><rect x="0.500" y="2.500" width="13" height="4" fill="#6db8f2" stroke="#4c9fe2" stroke-width=".8"/><rect x="2.500" y="0.500" width="3" height="4" rx="1" fill="#fff" stroke="#9a9a9a" stroke-width=".8"/><rect x="8.500" y="0.500" width="3" height="4" rx="1" fill="#fff" stroke="#9a9a9a" stroke-width=".8"/><path d="M4 8.500h2.500v2h-2.500v2h2.500M9 8.500v4" fill="none" stroke="#9a9a9a" stroke-width="1"/></svg><span class="t" style="left:94px;top:97px"><span class="n">2018</span>年</span><div class="dot-v" style="left:80px;top:111px;height:171px"></div><div class="dot-h" style="left:81px;top:126px;width:10px"></div><svg style="left:95px;top:119px" width="15" height="14" viewBox="0 0 15 14"><rect x="0.500" y="0.500" width="14" height="13" rx="1" fill="#fbfbfb" stroke="#b4b4b4"/><rect x="0.500" y="0.500" width="14" height="3.500" fill="#5fb2f0" stroke="#3f9be4" stroke-width=".8"/><path d="M3.500 7h8M3.500 10h8" stroke="#6db8f2" stroke-width="1.600"/></svg><span class="t" style="left:117px;top:120px"><span class="n">1</span>月</span><div class="dot-h" style="left:81px;top:149px;width:10px"></div><svg style="left:95px;top:142px" width="15" height="14" viewBox="0 0 15 14"><rect x="0.500" y="0.500" width="14" height="13" rx="1" fill="#fbfbfb" stroke="#b4b4b4"/><rect x="0.500" y="0.500" width="14" height="3.500" fill="#5fb2f0" stroke="#3f9be4" stroke-width=".8"/><path d="M3.500 7h8M3.500 10h8" stroke="#6db8f2" stroke-width="1.600"/></svg><span class="t" style="left:117px;top:143px"><span class="n">2</span>月</span><div class="dot-h" style="left:81px;top:172px;width:10px"></div><svg style="left:95px;top:165px" width="15" height="14" viewBox="0 0 15 14"><rect x="0.500" y="0.500" width="14" height="13" rx="1" fill="#fbfbfb" stroke="#b4b4b4"/><rect x="0.500" y="0.500" width="14" height="3.500" fill="#5fb2f0" stroke="#3f9be4" stroke-width=".8"/><path d="M3.500 7h8M3.500 10h8" stroke="#6db8f2" stroke-width="1.600"/></svg><span class="t" style="left:117px;top:166px"><span class="n">3</span>月</span><div class="dot-h" style="left:81px;top:195px;width:10px"></div><svg style="left:95px;top:188px" width="15" height="14" viewBox="0 0 15 14"><rect x="0.500" y="0.500" width="14" height="13" rx="1" fill="#fbfbfb" stroke="#b4b4b4"/><rect x="0.500" y="0.500" width="14" height="3.500" fill="#5fb2f0" stroke="#3f9be4" stroke-width=".8"/><path d="M3.500 7h8M3.500 10h8" stroke="#6db8f2" stroke-width="1.600"/></svg><span class="t" style="left:117px;top:189px"><span class="n">4</span>月</span><div class="dot-h" style="left:81px;top:218px;width:10px"></div><svg style="left:95px;top:211px" width="15" height="14" viewBox="0 0 15 14"><rect x="0.500" y="0.500" width="14" height="13" rx="1" fill="#fbfbfb" stroke="#b4b4b4"/><rect x="0.500" y="0.500" width="14" height="3.500" fill="#5fb2f0" stroke="#3f9be4" stroke-width=".8"/><path d="M3.500 7h8M3.500 10h8" stroke="#6db8f2" stroke-width="1.600"/></svg><span class="t" style="left:117px;top:212px"><span class="n">5</span>月</span><div class="dot-h" style="left:81px;top:241px;width:10px"></div><svg style="left:95px;top:234px" width="15" height="14" viewBox="0 0 15 14"><rect x="0.500" y="0.500" width="14" height="13" rx="1" fill="#fbfbfb" stroke="#b4b4b4"/><rect x="0.500" y="0.500" width="14" height="3.500" fill="#5fb2f0" stroke="#3f9be4" stroke-width=".8"/><path d="M3.500 7h8M3.500 10h8" stroke="#6db8f2" stroke-width="1.600"/></svg><span class="t" style="left:117px;top:235px"><span class="n">6</span>月</span><div class="dot-h" style="left:81px;top:264px;width:10px"></div><svg style="left:95px;top:257px" width="15" height="14" viewBox="0 0 15 14"><rect x="0.500" y="0.500" width="14" height="13" rx="1" fill="#fbfbfb" stroke="#b4b4b4"/><rect x="0.500" y="0.500" width="14" height="3.500" fill="#5fb2f0" stroke="#3f9be4" stroke-width=".8"/><path d="M3.500 7h8M3.500 10h8" stroke="#6db8f2" stroke-width="1.600"/></svg><span class="t" style="left:117px;top:258px"><span class="n">7</span>月</span><div class="vsb" style="left:183px;top:0;width:17px;height:272px"></div><svg style="left:188px;top:6px" width="7" height="4" viewBox="0 0 7 4"><path d="M0 4h7l-3.500-4z" fill="#444"/></svg><svg style="left:188px;top:262px" width="7" height="4" viewBox="0 0 7 4"><path d="M0 0h7l-3.500 4z" fill="#444"/></svg><div class="thumbv" style="left:184px;top:30px;width:14px;height:144px"></div><div style="left:187px;top:100px;width:8px;height:5px;background:repeating-linear-gradient(180deg,#5a5a5a 0,#5a5a5a 1px,transparent 1px,transparent 2px)"></div></div>
<div id="acct"><svg style="left:5px;top:5px" width="15" height="15" viewBox="0 0 15 15"><g fill="none" stroke="#2f8ee6" stroke-width="2.200"><path d="M2 6.500a5.500 5.500 0 0 1 9.500-2.500"/><path d="M13 8.500a5.500 5.500 0 0 1-9.500 2.500"/></g><path d="M13.500 1v5h-5z" fill="#2f8ee6"/><path d="M1.500 14v-5h5z" fill="#2f8ee6"/></svg><span class="t" style="left:28px;top:6px">查看账户详情<span class="p">:</span></span><svg style="left:179px;top:5px" width="15" height="15" viewBox="0 0 15 15"><circle cx="7.500" cy="7.500" r="7" fill="#9a9a9a" stroke="#7c7c7c"/><path d="M4.800 4.800l5.400 5.400M10.200 4.800l-5.400 5.400" stroke="#fff" stroke-width="2"/></svg></div><div id="prop"><div class="hd" style="left:0;width:12px"></div><div class="hd" style="left:12px;width:81px"><span class="t" style="left:0;width:80px;text-align:center">属性</span></div><div class="hd" style="left:93px;width:107px"><span class="t" style="left:0;width:106px;text-align:center">值</span></div><div class="c" style="left:0;top:20px;width:12px;background:linear-gradient(180deg,#fff,#ececec)"></div><div class="c" style="left:12px;top:20px;width:81px;background:#efefef"><span class="t" style="left:1px">账户名称</span></div><div class="c" style="left:93px;top:20px;width:107px;background:#efefef"><span class="t" style="left:1px">现金</span></div><div class="c" style="left:0;top:40px;width:12px;background:linear-gradient(180deg,#fff,#ececec)"></div><div class="c" style="left:12px;top:40px;width:81px;background:#f7f7fd"><span class="t" style="left:1px">启用日期</span></div><div class="c" style="left:93px;top:40px;width:107px;background:#f7f7fd"><span class="t" style="left:1px"><span class="n">2015</span><span class="p">-</span><span class="n">01</span><span class="p">-</span><span class="n">01</span></span></div><div class="c" style="left:0;top:60px;width:12px;background:linear-gradient(180deg,#fff,#ececec)"></div><div class="c" style="left:12px;top:60px;width:81px;background:#eef5fd"><span class="t" style="left:1px">启用状态</span></div><div class="c" style="left:93px;top:60px;width:107px;background:#eef5fd"><span class="t" style="left:1px">有效</span></div><div class="c" style="left:0;top:80px;width:12px;background:linear-gradient(180deg,#fff,#ececec)"></div><div class="c" style="left:12px;top:80px;width:81px;background:#f7f7fd"><span class="t" style="left:1px">币种</span></div><div class="c" style="left:93px;top:80px;width:107px;background:#f7f7fd"><span class="t" style="left:1px">人民币</span></div><div class="c" style="left:0;top:100px;width:12px;background:linear-gradient(180deg,#fff,#ececec)"></div><div class="c" style="left:12px;top:100px;width:81px;background:#eef5fd"><span class="t" style="left:1px">当前账期</span></div><div class="c" style="left:93px;top:100px;width:107px;background:#eef5fd"><span class="t" style="left:1px"><span class="n">2015</span>年<span class="n">1</span>月</span></div><div class="c" style="left:0;top:120px;width:12px;background:linear-gradient(180deg,#fff,#ececec)"></div><div class="c" style="left:12px;top:120px;width:81px;background:#f7f7fd"><span class="t" style="left:1px">期初余额</span></div><div class="c" style="left:93px;top:120px;width:107px;background:#f7f7fd"><span class="t" style="left:1px"><span class="n">10000</span></span></div><div class="c" style="left:0;top:140px;width:12px;background:linear-gradient(180deg,#fff,#ececec)"></div><div class="c" style="left:12px;top:140px;width:81px;background:#eef5fd"><span class="t" style="left:1px">当前余额</span></div><div class="c" style="left:93px;top:140px;width:107px;background:#eef5fd"><span class="t" style="left:1px"><span class="n">14500</span></span></div><svg style="left:4px;top:27px" width="4" height="7" viewBox="0 0 4 7"><path d="M0 0l4 3.500-4 3.500z" fill="#000"/></svg></div>
<div id="grid"><div id="gbody"><div id="ghead"><span class="t" style="left:12px;width:44px">序号</span><span class="t" style="left:57px;width:39px">状态</span><span class="t" style="left:97px;width:109px">账户名称</span><span class="t" style="left:207px;width:109px">发生日期</span><span class="t" style="left:317px;width:49px">凭证字</span><span class="t" style="left:367px;width:59px">凭证号</span><span class="t" style="left:427px;width:149px">摘要</span><span class="t" style="left:577px;width:69px">借方金额</span><span class="t" style="left:647px;width:69px">贷方金额</span><span class="t" style="left:717px;width:74px">余额</span><span class="t" style="left:792px;width:44px">方向</span><span class="t" style="left:837px;width:94px">收支类别</span><span class="t" style="left:932px;width:98px">自定义编号</span></div><div class="gr a" style="top:22px"><i class="ind"></i><span class="t c" style="left:12px;width:44px"><span class="n">1</span></span><i class="ball g"></i><span class="t" style="left:98px">现金</span><span class="t" style="left:212px"><span class="n">2018</span><span class="p">-</span><span class="n">01</span><span class="p">-</span><span class="n">19</span><span class="p"> </span><span class="n">11</span><span class="p">:</span><span class="n">50</span></span><span class="t c" style="left:317px;width:49px">付</span><span class="t c" style="left:367px;width:59px"><span class="n">002</span></span><span class="t" style="left:428px">支付房租</span><span class="t" style="left:578px"><span class="n">0</span></span><span class="t" style="left:648px"><span class="n">1000</span></span><span class="t" style="left:718px"><span class="n">14500</span></span><span class="t c" style="left:792px;width:44px">借</span><span class="t" style="left:838px">办公场所租金</span></div><div class="gr b" style="top:44px"><i class="ind"></i><span class="t c" style="left:12px;width:44px"><span class="n">2</span></span><i class="ball g"></i><span class="t" style="left:98px">现金</span><span class="t" style="left:212px"><span class="n">2018</span><span class="p">-</span><span class="n">01</span><span class="p">-</span><span class="n">17</span><span class="p"> </span><span class="n">11</span><span class="p">:</span><span class="n">04</span></span><span class="t c" style="left:317px;width:49px">付</span><span class="t c" style="left:367px;width:59px"><span class="n">001</span></span><span class="t" style="left:428px">采购付款</span><span class="t" style="left:578px"><span class="n">0</span></span><span class="t" style="left:648px"><span class="n">1000</span></span><span class="t" style="left:718px"><span class="n">15500</span></span><span class="t c" style="left:792px;width:44px">借</span><span class="t" style="left:838px">采购付款</span></div><div class="gr a" style="top:66px"><i class="ind"></i><span class="t c" style="left:12px;width:44px"><span class="n">3</span></span><i class="ball g"></i><span class="t" style="left:98px">现金</span><span class="t" style="left:212px"><span class="n">2017</span><span class="p">-</span><span class="n">10</span><span class="p">-</span><span class="n">20</span><span class="p"> </span><span class="n">10</span><span class="p">:</span><span class="n">46</span></span><span class="t c" style="left:317px;width:49px">收</span><span class="t c" style="left:367px;width:59px"><span class="n">010</span></span><span class="t" style="left:428px">销售应收款</span><span class="t" style="left:578px"><span class="n">1000</span></span><span class="t" style="left:648px"><span class="n">0</span></span><span class="t" style="left:718px"><span class="n">16500</span></span><span class="t c" style="left:792px;width:44px">借</span><span class="t" style="left:838px">销售收款</span></div><div class="gr b" style="top:88px"><i class="ind"></i><span class="t c" style="left:12px;width:44px"><span class="n">4</span></span><i class="ball g"></i><span class="t" style="left:98px">现金</span><span class="t" style="left:212px"><span class="n">2017</span><span class="p">-</span><span class="n">08</span><span class="p">-</span><span class="n">11</span><span class="p"> </span><span class="n">10</span><span class="p">:</span><span class="n">09</span></span><span class="t c" style="left:317px;width:49px">付</span><span class="t c" style="left:367px;width:59px"><span class="n">009</span></span><span class="t" style="left:428px">付借款利息</span><span class="t" style="left:578px"><span class="n">0</span></span><span class="t" style="left:648px"><span class="n">200</span></span><span class="t" style="left:718px"><span class="n">15500</span></span><span class="t c" style="left:792px;width:44px">借</span><span class="t" style="left:838px">付利息</span></div><div class="gr a" style="top:110px"><i class="ind"></i><span class="t c" style="left:12px;width:44px"><span class="n">5</span></span><i class="ball g"></i><span class="t" style="left:98px">现金</span><span class="t" style="left:212px"><span class="n">2017</span><span class="p">-</span><span class="n">06</span><span class="p">-</span><span class="n">05</span><span class="p"> </span><span class="n">16</span><span class="p">:</span><span class="n">57</span></span><span class="t c" style="left:317px;width:49px">付</span><span class="t c" style="left:367px;width:59px"><span class="n">008</span></span><span class="t" style="left:428px">李亚男<span class="n">2016</span>年<span class="n">5</span>月工资</span><span class="t" style="left:578px"><span class="n">0</span></span><span class="t" style="left:648px"><span class="n">1000</span></span><span class="t" style="left:718px"><span class="n">15700</span></span><span class="t c" style="left:792px;width:44px">借</span><span class="t" style="left:838px">工资</span></div><div class="gr b" style="top:132px"><i class="ind"></i><span class="t c" style="left:12px;width:44px"><span class="n">6</span></span><i class="ball g"></i><span class="t" style="left:98px">现金</span><span class="t" style="left:212px"><span class="n">2017</span><span class="p">-</span><span class="n">05</span><span class="p">-</span><span class="n">31</span><span class="p"> </span><span class="n">16</span><span class="p">:</span><span class="n">42</span></span><span class="t c" style="left:317px;width:49px">收</span><span class="t c" style="left:367px;width:59px"><span class="n">007</span></span><span class="t" style="left:428px">销售应收款</span><span class="t" style="left:578px"><span class="n">1000</span></span><span class="t" style="left:648px"><span class="n">0</span></span><span class="t" style="left:718px"><span class="n">16700</span></span><span class="t c" style="left:792px;width:44px">借</span><span class="t" style="left:838px">销售收款</span></div><div class="gr a" style="top:154px"><i class="ind"></i><span class="t c" style="left:12px;width:44px"><span class="n">7</span></span><i class="ball g"></i><span class="t" style="left:98px">现金</span><span class="t" style="left:212px"><span class="n">2017</span><span class="p">-</span><span class="n">05</span><span class="p">-</span><span class="n">31</span><span class="p"> </span><span class="n">16</span><span class="p">:</span><span class="n">34</span></span><span class="t c" style="left:317px;width:49px">收</span><span class="t c" style="left:367px;width:59px"><span class="n">006</span></span><span class="t" style="left:428px">销售应收款</span><span class="t" style="left:578px"><span class="n">1000</span></span><span class="t" style="left:648px"><span class="n">0</span></span><span class="t" style="left:718px"><span class="n">15700</span></span><span class="t c" style="left:792px;width:44px">借</span><span class="t" style="left:838px">销售收款</span></div><div class="gr b" style="top:176px"><i class="ind"></i><span class="t c" style="left:12px;width:44px"><span class="n">8</span></span><i class="ball v"></i><span class="t" style="left:98px">现金</span><span class="t" style="left:212px"><span class="n">2017</span><span class="p">-</span><span class="n">05</span><span class="p">-</span><span class="n">27</span><span class="p"> </span><span class="n">15</span><span class="p">:</span><span class="n">24</span></span><span class="t c" style="left:317px;width:49px">付</span><span class="t c" style="left:367px;width:59px"><span class="n">005</span></span><span class="t" style="left:428px">请客户吃饭</span><span class="t" style="left:578px"><span class="n">0</span></span><span class="t" style="left:648px"><span class="n">200</span></span><span class="t" style="left:718px"><span class="n">14700</span></span><span class="t c" style="left:792px;width:44px">借</span><span class="t" style="left:838px">招待费</span></div><div class="gr a" style="top:198px"><i class="ind"></i><span class="t c" style="left:12px;width:44px"><span class="n">9</span></span><i class="ball v"></i><span class="t" style="left:98px">现金</span><span class="t" style="left:212px"><span class="n">2017</span><span class="p">-</span><span class="n">05</span><span class="p">-</span><span class="n">25</span><span class="p"> </span><span class="n">09</span><span class="p">:</span><span class="n">20</span></span><span class="t c" style="left:317px;width:49px">收</span><span class="t c" style="left:367px;width:59px"><span class="n">003</span></span><span class="t" style="left:428px">销售应收款</span><span class="t" style="left:578px"><span class="n">1000</span></span><span class="t" style="left:648px"><span class="n">0</span></span><span class="t" style="left:718px"><span class="n">14900</span></span><span class="t c" style="left:792px;width:44px">借</span><span class="t" style="left:838px">销售收款</span></div><div class="gr b" style="top:220px"><i class="ind"></i><span class="t c" style="left:12px;width:44px"><span class="n">10</span></span><i class="ball g"></i><span class="t" style="left:98px">现金</span><span class="t" style="left:212px"><span class="n">2017</span><span class="p">-</span><span class="n">05</span><span class="p">-</span><span class="n">22</span><span class="p"> </span><span class="n">17</span><span class="p">:</span><span class="n">08</span></span><span class="t c" style="left:317px;width:49px">收</span><span class="t c" style="left:367px;width:59px"><span class="n">002</span></span><span class="t" style="left:428px">销售应收款</span><span class="t" style="left:578px"><span class="n">1000</span></span><span class="t" style="left:648px"><span class="n">0</span></span><span class="t" style="left:718px"><span class="n">13900</span></span><span class="t c" style="left:792px;width:44px">借</span><span class="t" style="left:838px">销售收款</span></div><div class="gr a" style="top:242px"><i class="ind"></i><span class="t c" style="left:12px;width:44px"><span class="n">11</span></span><i class="ball g"></i><span class="t" style="left:98px">现金</span><span class="t" style="left:212px"><span class="n">2016</span><span class="p">-</span><span class="n">09</span><span class="p">-</span><span class="n">20</span><span class="p"> </span><span class="n">10</span><span class="p">:</span><span class="n">10</span></span><span class="t c" style="left:317px;width:49px">付</span><span class="t c" style="left:367px;width:59px"><span class="n">007</span></span><span class="t" style="left:428px">路丹个人借款</span><span class="t" style="left:578px"><span class="n">0</span></span><span class="t" style="left:648px"><span class="n">1000</span></span><span class="t" style="left:718px"><span class="n">12900</span></span><span class="t c" style="left:792px;width:44px">借</span><span class="t" style="left:838px">支出科目</span><span class="t" style="left:933px"><span class="p">CW</span><span class="n">20160920000</span></span></div><div class="gr b" style="top:264px"><i class="ind"></i><span class="t c" style="left:12px;width:44px"><span class="n">12</span></span><i class="ball g"></i><span class="t" style="left:98px">现金</span><span class="t" style="left:212px"><span class="n">2016</span><span class="p">-</span><span class="n">09</span><span class="p">-</span><span class="n">20</span><span class="p"> </span><span class="n">09</span><span class="p">:</span><span class="n">11</span></span><span class="t c" style="left:317px;width:49px">收</span><span class="t c" style="left:367px;width:59px"><span class="n">006</span></span><span class="t" style="left:428px">亚拓软件测试应收款</span><span class="t" style="left:578px"><span class="n">1500</span></span><span class="t" style="left:648px"><span class="n">0</span></span><span class="t" style="left:718px"><span class="n">13900</span></span><span class="t c" style="left:792px;width:44px">借</span><span class="t" style="left:838px">销售收款</span><span class="t" style="left:933px"><span class="p">CW</span><span class="n">20160920000</span></span></div><div class="gr a" style="top:286px"><i class="ind"></i><span class="t c" style="left:12px;width:44px"><span class="n">13</span></span><i class="ball g"></i><span class="t" style="left:98px">现金</span><span class="t" style="left:212px"><span class="n">2016</span><span class="p">-</span><span class="n">09</span><span class="p">-</span><span class="n">19</span><span class="p"> </span><span class="n">17</span><span class="p">:</span><span class="n">22</span></span><span class="t c" style="left:317px;width:49px">收</span><span class="t c" style="left:367px;width:59px"><span class="n">001</span></span><span class="t" style="left:428px">销售应收款</span><span class="t" style="left:578px"><span class="n">100</span></span><span class="t" style="left:648px"><span class="n">0</span></span><span class="t" style="left:718px"><span class="n">12400</span></span><span class="t c" style="left:792px;width:44px">借</span><span class="t" style="left:838px">销售收款</span></div><div class="gr b" style="top:308px"><i class="ind"></i><span class="t c" style="left:12px;width:44px"><span class="n">14</span></span><i class="ball g"></i><span class="t" style="left:98px">现金</span><span class="t" style="left:212px"><span class="n">2016</span><span class="p">-</span><span class="n">09</span><span class="p">-</span><span class="n">18</span><span class="p"> </span><span class="n">14</span><span class="p">:</span><span class="n">09</span></span><span class="t c" style="left:317px;width:49px">付</span><span class="t c" style="left:367px;width:59px"><span class="n">005</span></span><span class="t" style="left:428px">李亚男<span class="n">2016</span>年<span class="n">9</span>月工资</span><span class="t" style="left:578px"><span class="n">0</span></span><span class="t" style="left:648px"><span class="n">2400</span></span><span class="t" style="left:718px"><span class="n">12300</span></span><span class="t c" style="left:792px;width:44px">借</span><span class="t" style="left:838px">工资</span><span class="t" style="left:933px"><span class="p">CW</span><span class="n">20160918000</span></span></div><div class="gr a" style="top:330px"><i class="ind"></i><span class="t c" style="left:12px;width:44px"><span class="n">15</span></span><i class="ball v"></i><span class="t" style="left:98px">现金</span><span class="t" style="left:212px"><span class="n">2016</span><span class="p">-</span><span class="n">09</span><span class="p">-</span><span class="n">18</span><span class="p"> </span><span class="n">11</span><span class="p">:</span><span class="n">22</span></span><span class="t c" style="left:317px;width:49px">收</span><span class="t c" style="left:367px;width:59px"><span class="n">003</span></span><span class="t" style="left:428px">存入现金</span><span class="t" style="left:578px"><span class="n">4000</span></span><span class="t" style="left:648px"><span class="n">0</span></span><span class="t" style="left:718px"><span class="n">14700</span></span><span class="t c" style="left:792px;width:44px">借</span><span class="t" style="left:838px">收入科目</span><span class="t" style="left:933px"><span class="p">CW</span><span class="n">20160918000</span></span></div><div class="gr b" style="top:352px"><i class="ind"></i><span class="t c" style="left:12px;width:44px"><span class="n">16</span></span><i class="ball g"></i><span class="t" style="left:98px">现金</span><span class="t" style="left:212px"><span class="n">2016</span><span class="p">-</span><span class="n">09</span><span class="p">-</span><span class="n">18</span><span class="p"> </span><span class="n">11</span><span class="p">:</span><span class="n">20</span></span><span class="t c" style="left:317px;width:49px">付</span><span class="t c" style="left:367px;width:59px"><span class="n">002</span></span><span class="t" style="left:428px">支付水电费</span><span class="t" style="left:578px"><span class="n">0</span></span><span class="t" style="left:648px"><span class="n">400</span></span><span class="t" style="left:718px"><span class="n">10700</span></span><span class="t c" style="left:792px;width:44px">借</span><span class="t" style="left:838px">水电费</span><span class="t" style="left:933px"><span class="p">CW</span><span class="n">20160918000</span></span></div><div class="gr a" style="top:374px"><i class="ind"></i><span class="t c" style="left:12px;width:44px"><span class="n">17</span></span><i class="ball v"></i><span class="t" style="left:98px">现金</span><span class="t" style="left:212px"><span class="n">2016</span><span class="p">-</span><span class="n">09</span><span class="p">-</span><span class="n">18</span><span class="p"> </span><span class="n">11</span><span class="p">:</span><span class="n">17</span></span><span class="t c" style="left:317px;width:49px">收</span><span class="t c" style="left:367px;width:59px"><span class="n">001</span></span><span class="t" style="left:428px">销售应收款</span><span class="t" style="left:578px"><span class="n">1000</span></span><span class="t" style="left:648px"><span class="n">0</span></span><span class="t" style="left:718px"><span class="n">11100</span></span><span class="t c" style="left:792px;width:44px">借</span><span class="t" style="left:838px">销售收款</span><span class="t" style="left:933px"><span class="p">CW</span><span class="n">20160918000</span></span></div><div class="gr b" style="top:396px"><i class="ind"></i><span class="t c" style="left:12px;width:44px"><span class="n">18</span></span><i class="ball g"></i><span class="t" style="left:98px">现金</span><span class="t" style="left:212px"><span class="n">2015</span><span class="p">-</span><span class="n">09</span><span class="p">-</span><span class="n">18</span><span class="p"> </span><span class="n">12</span><span class="p">:</span><span class="n">33</span></span><span class="t c" style="left:317px;width:49px">收</span><span class="t c" style="left:367px;width:59px"><span class="n">001</span></span><span class="t" style="left:428px">销售应收款</span><span class="t" style="left:578px"><span class="n">100</span></span><span class="t" style="left:648px"><span class="n">0</span></span><span class="t" style="left:718px"><span class="n">10100</span></span><span class="t c" style="left:792px;width:44px">借</span><span class="t" style="left:838px">销售收款</span></div><div class="gr a" style="top:418px"><i class="ind"></i><span class="t c" style="left:12px;width:44px"><span class="n">19</span></span><i class="ball g"></i><span class="t" style="left:98px">现金</span><span class="t" style="left:212px"><span class="n">2015</span><span class="p">-</span><span class="n">01</span><span class="p">-</span><span class="n">01</span><span class="p"> </span><span class="n">00</span><span class="p">:</span><span class="n">00</span></span><span class="t c" style="left:317px;width:49px">收</span><span class="t c" style="left:367px;width:59px"><span class="n">000</span></span><span class="t" style="left:428px">账户期初余额凭证（现金）</span><span class="t" style="left:578px"><span class="n">10000</span></span><span class="t" style="left:648px"><span class="n">0</span></span><span class="t" style="left:718px"><span class="n">10000</span></span><span class="t c" style="left:792px;width:44px">借</span></div><i class="vl" style="left:11px"></i><i class="vl" style="left:56px"></i><i class="vl" style="left:96px"></i><i class="vl" style="left:206px"></i><i class="vl" style="left:316px"></i><i class="vl" style="left:366px"></i><i class="vl" style="left:426px"></i><i class="vl" style="left:576px"></i><i class="vl" style="left:646px"></i><i class="vl" style="left:716px"></i><i class="vl" style="left:791px"></i><i class="vl" style="left:836px"></i><i class="vl" style="left:931px"></i><svg style="left:4px;top:403px" width="4" height="7" viewBox="0 0 4 7"><path d="M0 0l4 3.500-4 3.500z" fill="#000"/></svg></div><div id="gfoot"><i class="ind" style="left:0;top:0;width:11px;height:22px;background:linear-gradient(180deg,#fff 0,#fff 7px,#f4f4f4 9px,#f2f2f2 100%)"></i><span class="t" style="left:597px"><span class="n">21700</span></span><span class="t" style="left:670px"><span class="n">7200</span></span></div><div id="hsb"><svg style="left:6px;top:5px" width="4" height="7" viewBox="0 0 4 7"><path d="M4 0v7l-4-3.500z" fill="#444"/></svg><svg style="left:1003px;top:5px" width="4" height="7" viewBox="0 0 4 7"><path d="M0 0v7l4-3.500z" fill="#444"/></svg><div class="thumbh" style="left:17px;top:1px;width:471px;height:15px"></div><div style="left:250px;top:5px;width:5px;height:8px;background:repeating-linear-gradient(90deg,#5a5a5a 0,#5a5a5a 1px,transparent 1px,transparent 2px)"></div></div><div id="vsb2" class="vsb"><svg style="left:5px;top:7px" width="7" height="4" viewBox="0 0 7 4"><path d="M0 4h7l-3.500-4z" fill="#444"/></svg><svg style="left:5px;top:444px" width="7" height="4" viewBox="0 0 7 4"><path d="M0 0h7l-3.500 4z" fill="#444"/></svg><div class="thumbv" style="left:1px;top:17px;width:14px;height:399px"></div><div style="left:4px;top:213px;width:8px;height:5px;background:repeating-linear-gradient(180deg,#5a5a5a 0,#5a5a5a 1px,transparent 1px,transparent 2px)"></div></div><div id="corner"></div></div>
<div id="status"><svg style="left:4px;top:6px" width="16" height="16" viewBox="0 0 16 16"><rect width="16" height="16" rx="2" fill="#d9251d"/><g fill="#fff" transform="translate(2.200 1.600) scale(.45)"><path d="M0.500 6C1.800 4.800 3.400 4.800 4.600 5.800 7.200 8.500 9.200 14 9.900 21.600L8.300 22.300C5 21 1.300 14.500 0.500 6Z"/><path d="M8.900 21.800C8 15 11.500 6.500 21.200 0.900 22.300 6 19.500 13 12.600 19.300Z"/><path d="M12.200 20.800C15 16 19.500 12.500 25.400 11.300 25 16 21.500 21 14.500 23.300 13.500 22.800 12.600 21.800 12.200 20.800Z"/><path d="M0 20C2 23 5.500 24.800 9.800 25.200 14.500 25.500 18.500 24 21.300 21.100 20.800 25 16.500 27.800 11 27.900 5.500 28 1 25 0 20Z"/></g></svg><span class="t" style="left:23px">应用中心<span class="p">: </span><span class="n">127</span><span class="p">.</span><span class="n">0</span><span class="p">.</span><span class="n">0</span><span class="p">.</span><span class="n">1</span><span class="p">:</span><span class="n">7092</span></span><i class="sp" style="left:199px"></i><svg style="left:207px;top:6px" width="15" height="15" viewBox="0 0 15 15"><circle cx="7.500" cy="7.500" r="7" fill="#3daa35" stroke="#2a8a26"/><path d="M3.800 7.800l2.600 2.600 4.800-5.400" fill="none" stroke="#fff" stroke-width="2.200" stroke-linecap="round" stroke-linejoin="round"/></svg><span class="t" style="left:226px">连接状态<span class="p">: </span>正常</span><i class="sp" style="left:322px"></i><span class="t" style="left:336px">账套<span class="p">: </span>出纳</span><i class="sp" style="left:545px"></i><span class="t" style="left:560px">操作员<span class="p">: </span>系统管理员<span class="p">(admin)</span></span><i class="sp" style="left:727px"></i><span class="t" style="left:743px">正式版<span class="p"> </span>授权序列号<span class="p">:</span></span><i class="sp" style="left:1218px"></i><svg style="left:1231px;top:15px" width="9" height="9" viewBox="0 0 9 9"><g fill="#b8b8b8"><rect x="6" y="0" width="2" height="2"/><rect x="3" y="3" width="2" height="2"/><rect x="6" y="3" width="2" height="2"/><rect x="0" y="6" width="2" height="2"/><rect x="3" y="6" width="2" height="2"/><rect x="6" y="6" width="2" height="2"/></g></svg></div><div id="mosaic"><i style="left:8px;top:1px;width:67px;height:2px;background:#e9e9e9"></i><i style="left:4px;top:17px;width:71px;height:4px;background:#dbe5ee;border-radius:0 0 10px 10px"></i><i style="left:0px;top:3px;width:7px;height:7px;background:#dcdcdc;border-radius:7px 0 0 0"></i><i style="left:7px;top:3px;width:7px;height:7px;background:#d8d8d8"></i><i style="left:14px;top:3px;width:7px;height:7px;background:#aeaeae"></i><i style="left:21px;top:3px;width:7px;height:7px;background:#b2b2b2"></i><i style="left:28px;top:3px;width:7px;height:7px;background:#d2d2d2"></i><i style="left:35px;top:3px;width:7px;height:7px;background:#eeeeee"></i><i style="left:42px;top:3px;width:7px;height:7px;background:#a8a8a8"></i><i style="left:49px;top:3px;width:7px;height:7px;background:#d0d0d0"></i><i style="left:56px;top:3px;width:7px;height:7px;background:#b0b0b0"></i><i style="left:63px;top:3px;width:7px;height:7px;background:#d4d4d4"></i><i style="left:0px;top:10px;width:7px;height:7px;background:#cfcfcf;border-radius:0 0 0 7px"></i><i style="left:7px;top:10px;width:7px;height:7px;background:#d0d0d0"></i><i style="left:14px;top:10px;width:7px;height:7px;background:#cccccc"></i><i style="left:21px;top:10px;width:7px;height:7px;background:#cecece"></i><i style="left:28px;top:10px;width:7px;height:7px;background:#d0d0d0"></i><i style="left:35px;top:10px;width:7px;height:7px;background:#d0d0d0"></i><i style="left:42px;top:10px;width:7px;height:7px;background:#b0b0b0"></i><i style="left:49px;top:10px;width:7px;height:7px;background:#c8c8c8"></i><i style="left:56px;top:10px;width:7px;height:7px;background:#c4c4c4"></i><i style="left:63px;top:10px;width:7px;height:7px;background:#dadada"></i></div>
</div>
</body></html>
